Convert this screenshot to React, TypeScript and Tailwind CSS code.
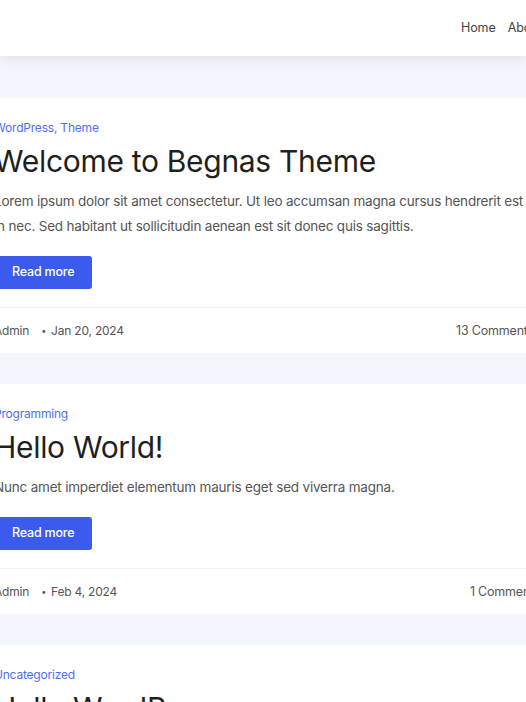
const posts = [
  {
    cats: "WordPress, Theme",
    title: "Welcome to Begnas Theme",
    excerpt:
      "Lorem ipsum dolor sit amet consectetur. Ut leo accumsan magna cursus hendrerit est in nec. Sed habitant ut sollicitudin aenean est sit donec quis sagittis.",
    date: "Jan 20, 2024",
    comments: "13 Comments",
  },
  {
    cats: "Programming",
    title: "Hello World!",
    excerpt: "Nunc amet imperdiet elementum mauris eget sed viverra magna.",
    date: "Feb 4, 2024",
    comments: "1 Comment",
  },
  {
    cats: "Uncategorized",
    title: "Hello WordPress",
    excerpt: "Lorem ipsum dolor sit amet consectetur adipiscing elit.",
    date: "Mar 2, 2024",
    comments: "0 Comments",
  },
];

export default function App() {
  return (
    <div
      className="h-[702px] w-[526px] overflow-hidden bg-[#f3f6fd] text-[#222]"
      style={{ fontFamily: "Inter, 'Noto Sans', sans-serif" }}
    >
      {/* top bar, page is scrolled sideways so the logo is out of view */}
      <header className="relative z-10 flex h-14 items-center bg-white pl-[461px] shadow-[0_4px_12px_rgba(0,0,0,0.08)]">
        <nav className="flex shrink-0 gap-3 text-[12.5px] tracking-[-0.1px] text-[#444]">
          <span>Home</span>
          <span>About</span>
          <span>Blog</span>
        </nav>
      </header>

      <main className="mt-[42px] flex flex-col gap-[31px]">
        {posts.map((p) => (
          <article key={p.title} className="bg-white">
            <div className="-ml-[6px] w-[540px] pt-5 pb-3">
              <p className="text-[12px] leading-5 tracking-[-0.2px] text-[#4f6ef7]">{p.cats}</p>
              <h2 className="mt-[3px] text-[30px] leading-10 font-normal tracking-[-0.3px] text-[#1f1f1f]">
                {p.title}
              </h2>
              <p className="mt-2 text-[13.5px] leading-[25px] tracking-[-0.2px] text-[#555]">
                {p.excerpt}
              </p>
              <button
                type="button"
                className="mt-[17px] h-[33px] rounded-[3px] bg-[#3b5bef] px-[18px] text-[12.5px] font-medium tracking-[-0.2px] text-white"
              >
                Read more
              </button>
              <div className="mt-[18px] flex items-center justify-between border-t border-[#f3f3f3] pt-[13px] text-[12px] leading-5 tracking-[-0.2px] text-[#555]">
                <div className="flex items-center">
                  <span>Admin</span>
                  <span className="ml-3 text-[9px]">•</span>
                  <span className="ml-[5px]">{p.date}</span>
                </div>
                <span className="text-[12.5px]">{p.comments}</span>
              </div>
            </div>
          </article>
        ))}
      </main>
    </div>
  );
}
